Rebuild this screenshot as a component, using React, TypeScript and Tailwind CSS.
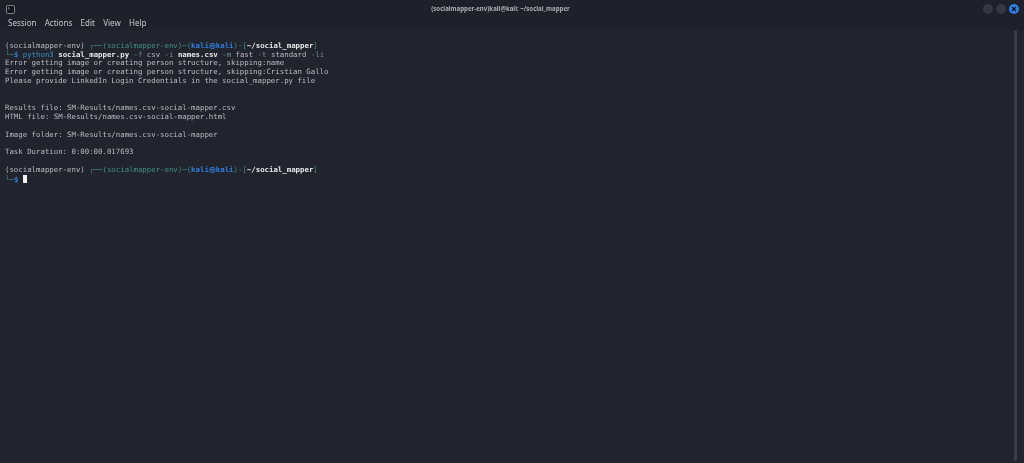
import React from "react";

const G = "text-[#3f8f83]";
const B = "text-[#2f7fe0]";
const W = "text-[#e6e8ea] font-bold";
const A = "text-[#6f8f92]";

function Prompt() {
  return (
    <>
      <span>(socialmapper-env) </span>
      <span className={G}>┌──(socialmapper-env)─(</span>
      <span className={`${B} font-bold`}>kali㉿kali</span>
      <span className={G}>)-[</span>
      <span className={W}>~/social_mapper</span>
      <span className={G}>]</span>
    </>
  );
}

function Line({ children }: { children?: React.ReactNode }) {
  return <div className="h-[8.9px] leading-[8.9px] whitespace-pre">{children}</div>;
}

export default function App() {
  return (
    <div className="w-[1024px] h-[463px] overflow-hidden bg-[#21242d] flex flex-col font-['DejaVu_Sans_Mono',monospace]">
      <div className="bg-[#1f212a] h-[30px] shrink-0 flex flex-col">
        <div className="h-[17px] flex items-center justify-between pl-[6px] pr-[5px] pt-[1px]">
          <svg width="9" height="9" viewBox="0 0 9 9" className="blur-[0.3px]">
            <rect x="0.5" y="0.5" width="8" height="8" rx="1" fill="#14171d" stroke="#8a8e95" strokeWidth="0.9" />
            <path d="M2 2.4l1.4 1L2 4.4" fill="none" stroke="#a8abb0" strokeWidth="0.7" />
          </svg>
          <div className="flex-1 text-center text-[6.1px] text-[#a9acb2] font-bold font-['Noto_Sans',sans-serif] pl-[3px] blur-[0.3px]">
            (socialmapper-env)kali@kali: ~/social_mapper
          </div>
          <div className="flex items-center gap-[3px]">
            <div className="w-[10px] h-[10px] rounded-full bg-[#343842]" />
            <div className="w-[10px] h-[10px] rounded-full bg-[#343842]" />
            <div className="w-[10px] h-[10px] rounded-full bg-[#2f7fe6] flex items-center justify-center">
              <svg width="6" height="6" viewBox="0 0 6 6">
                <path d="M1 1l4 4M5 1l-4 4" stroke="#10151f" strokeWidth="1.2" />
              </svg>
            </div>
          </div>
        </div>
        <div className="h-[11px] flex items-center gap-[8.3px] pl-[8px] text-[8px] text-[#c5c7cb] font-['Noto_Sans',sans-serif] blur-[0.3px]">
          <span>Session</span>
          <span>Actions</span>
          <span>Edit</span>
          <span>View</span>
          <span>Help</span>
        </div>
      </div>
      <div className="flex-1 flex min-h-0">
        <div className="flex-1 pt-[11.7px] pl-[5px] text-[7.36px] text-[#b9bcc0] blur-[0.3px]">
          <Line><Prompt /></Line>
          <Line>
            <span className={G}>└─</span>
            <span className={`${B} font-bold`}>$ </span>
            <span className="text-[#3d8fc4]">python3 </span>
            <span className={W}>social_mapper.py</span>
            <span className={A}> -f </span>
            <span>csv </span>
            <span className={A}>-i </span>
            <span className={W}>names.csv</span>
            <span className={A}> -m </span>
            <span>fast </span>
            <span className={A}>-t </span>
            <span>standard </span>
            <span className={A}>-li</span>
          </Line>
          <Line>Error getting image or creating person structure, skipping:name</Line>
          <Line>Error getting image or creating person structure, skipping:Cristian Gallo</Line>
          <Line>Please provide LinkedIn Login Credentials in the social_mapper.py file</Line>
          <Line />
          <Line />
          <Line>Results file: SM-Results/names.csv-social-mapper.csv</Line>
          <Line>HTML file: SM-Results/names.csv-social-mapper.html</Line>
          <Line />
          <Line>Image folder: SM-Results/names.csv-social-mapper</Line>
          <Line />
          <Line>Task Duration: 0:00:00.017693</Line>
          <Line />
          <Line><Prompt /></Line>
          <Line>
            <span className={G}>└─</span>
            <span className={`${B} font-bold`}>$ </span>
            <span className="inline-block w-[4.4px] h-[8px] bg-[#f2f3f4] align-[-1px]" />
          </Line>
        </div>
        <div className="w-[3px] mr-[6.5px] mb-[2px] rounded-full bg-[#3a3d45]" />
        <div className="w-[0.5px] bg-[#16181f]" />
      </div>
    </div>
  );
}
